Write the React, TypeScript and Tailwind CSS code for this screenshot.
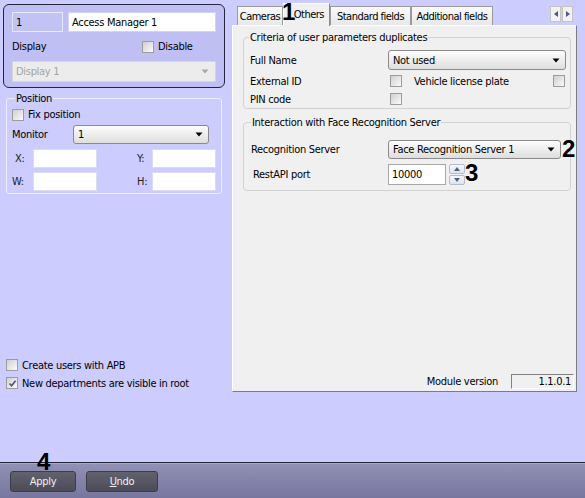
import React from "react";

const Arrow = ({ color = "#000" }: { color?: string }) => (
  <svg width="8" height="5" viewBox="0 0 8 5" className="shrink-0">
    <polygon points="0.5,0.5 7.5,0.5 4,4.5" fill={color} />
  </svg>
);

function Cb({ checked }: { checked?: boolean }) {
  return (
    <span className="inline-flex w-[12px] h-[12px] shrink-0 items-center justify-center border border-[#9c9c9c] bg-linear-to-br from-[#cfcfcf] to-[#fbfbfb]">
      {checked && (
        <svg width="9" height="9" viewBox="0 0 9 9">
          <path d="M1.5 4.5 L3.6 6.8 L7.6 1.8" stroke="#4a5a78" strokeWidth="1.7" fill="none" />
        </svg>
      )}
    </span>
  );
}

function Sel({ text, className }: { text: string; className: string }) {
  return (
    <div
      className={
        "flex items-center justify-between pl-[4px] pr-[5px] rounded-[3px] border border-[#8a8a8a] bg-linear-to-b from-[#fdfdfd] to-[#dedede] " +
        className
      }
    >
      <span>{text}</span>
      <Arrow />
    </div>
  );
}

function Tab({ label, w }: { label: string; w: string }) {
  return (
    <div
      className={
        "h-[19px] flex items-center justify-center whitespace-nowrap tracking-[-0.5px] border border-b-0 border-[#9a9a9a] bg-linear-to-b from-[#fafafa] to-[#e8e8e8] " +
        w
      }
    >
      {label}
    </div>
  );
}

export default function App() {
  return (
    <div className="relative w-[585px] h-[498px] flex flex-col bg-[#ccccff] text-black text-[11px] tracking-[-0.3px] leading-none font-['DejaVu_Sans_Condensed','DejaVu_Sans',sans-serif]">
      <div className="flex h-[392px]">
        {/* Left column */}
        <div className="w-[230px] flex flex-col">
          <div className="ml-[3px] mt-[4px] w-[222px] h-[84px] rounded-[6px] border border-[#24243a] bg-[#bfbff3] px-[8px] pt-[7px]">
            <div className="flex gap-[5px] h-[20px]">
              <div className="w-[51px] border border-[#e8e8ff] bg-[#c2c2f5] flex items-center px-[3px]">1</div>
              <div className="flex-1 bg-white border border-[#d4d4ee] flex items-center px-[3px]">Access Manager 1</div>
            </div>
            <div className="flex items-center h-[29px]">
              <span className="w-[130px]">Display</span>
              <span className="flex items-center gap-[4px]">
                <Cb />
                Disable
              </span>
            </div>
            <div className="h-[21px] flex items-center justify-between pl-[3px] pr-[6px] border border-[#d6d6d6] bg-[#ececec] text-[#a4a4a4]">
              <span>Display 1</span>
              <Arrow color="#a8a8a8" />
            </div>
          </div>

          <fieldset className="ml-[6px] mt-[3px] w-[216px] border border-[#eeeeff] rounded-[3px] pl-[5px] pr-[4px] pb-[2px]">
            <legend className="ml-[3px] px-[1px] leading-[15px]">Position</legend>
            <div className="mt-[2px] h-[13px] flex items-center gap-[4px]">
              <Cb />
              Fix position
            </div>
            <div className="mt-[4px] h-[19px] flex items-center">
              <span className="w-[61px]">Monitor</span>
              <Sel text="1" className="w-[136px] h-[19px]" />
            </div>
            <div className="mt-[5px] h-[19px] flex items-center">
              <span className="w-[21px] pl-[3px] text-[#222]">X:</span>
              <div className="w-[64px] h-[19px] bg-white border border-[#dcdcf0]" />
              <span className="ml-[40px] w-[15px] text-[#222]">Y:</span>
              <div className="w-[64px] h-[19px] bg-white border border-[#dcdcf0]" />
            </div>
            <div className="mt-[4px] h-[19px] flex items-center">
              <span className="w-[21px] text-[#222]">W:</span>
              <div className="w-[64px] h-[19px] bg-white border border-[#dcdcf0]" />
              <span className="ml-[40px] w-[15px] text-[#222]">H:</span>
              <div className="w-[64px] h-[19px] bg-white border border-[#dcdcf0]" />
            </div>
          </fieldset>

          <div className="flex-1" />
          <div className="pl-[6px]">
            <div className="h-[18px] flex items-center gap-[4px]">
              <Cb />
              Create users with APB
            </div>
            <div className="h-[18px] flex items-center gap-[4px]">
              <Cb checked />
              New departments are visible in root
            </div>
          </div>
        </div>

        {/* Right tab control */}
        <div className="w-[348px] flex flex-col">
          <div className="h-[25px] flex items-end pl-[7px]">
            <Tab label="Cameras" w="w-[46px]" />
            <div className="relative z-10 mb-[-1px] h-[23px] w-[47px] flex items-start pt-[5px] justify-end pr-[5px] tracking-[-0.5px] border border-b-0 border-white border-r-[#8a8a8a] bg-[#f0f0f0]">
              Others
            </div>
            <Tab label="Standard fields" w="w-[81px]" />
            <Tab label="Additional fields" w="w-[82px]" />
            <div className="ml-auto mr-[5px] self-start mt-[6px] flex gap-[1px]">
              <div className="w-[11px] h-[16px] flex items-center justify-center border border-[#c4c4c4] bg-[#f2f2f2]">
                <svg width="4" height="6" viewBox="0 0 4 6"><polygon points="4,0 4,6 0,3" fill="#4a5a80" /></svg>
              </div>
              <div className="w-[11px] h-[16px] flex items-center justify-center border border-[#c4c4c4] bg-[#f2f2f2]">
                <svg width="4" height="6" viewBox="0 0 4 6"><polygon points="0,0 0,6 4,3" fill="#4a5a80" /></svg>
              </div>
            </div>
          </div>

          <div className="flex-1 ml-[2px] mr-[1px] flex flex-col bg-[#f0f0f0] border border-white border-r-[#7c7c7c] border-b-[#7c7c7c] pl-[10px] pr-[5px]">
            <fieldset className="mt-[4px] border border-[#d2d2d2] rounded-[4px] pl-[6px] pr-[4px]">
              <legend className="ml-[-1px] px-[1px] leading-[15px]">Criteria of user parameters duplicates</legend>
              <div className="mt-[5px] h-[20px] flex items-center">
                <span className="w-[138px]">Full Name</span>
                <Sel text="Not used" className="w-[178px] h-[20px]" />
              </div>
              <div className="mt-[2px] h-[18px] flex items-center">
                <span className="w-[140px]">External ID</span>
                <Cb />
                <span className="ml-[12px]">Vehicle license plate</span>
                <span className="ml-auto mr-[1px] flex">
                  <Cb />
                </span>
              </div>
              <div className="h-[18px] flex items-center">
                <span className="w-[140px]">PIN code</span>
                <Cb />
              </div>
            </fieldset>

            <fieldset className="mt-[6px] border border-[#d2d2d2] rounded-[4px] pl-[6px] pr-[4px] pb-[5px]">
              <legend className="ml-[1px] px-[1px] leading-[15px]">Interaction with Face Recognition Server</legend>
              <div className="mt-[10px] h-[19px] flex items-center">
                <span className="w-[138px] pl-[1px]">Recognition Server</span>
                <Sel text="Face Recognition Server 1" className="w-[173px] h-[19px]" />
              </div>
              <div className="mt-[5px] h-[21px] flex items-center">
                <span className="w-[138px] pl-[3px]">RestAPI port</span>
                <div className="w-[58px] h-[21px] bg-white border border-[#a8a8a8] flex items-center pl-[3px]">10000</div>
                <div className="ml-[3px] w-[16px] h-[21px] flex flex-col gap-[1px]">
                  <div className="flex-1 flex items-center justify-center border border-[#b4bccc] rounded-[2px] bg-linear-to-b from-[#f6f8fc] to-[#dde3ee]">
                    <svg width="6" height="4" viewBox="0 0 6 4"><polygon points="0,4 6,4 3,0" fill="#4d6185" /></svg>
                  </div>
                  <div className="flex-1 flex items-center justify-center border border-[#b4bccc] rounded-[2px] bg-linear-to-b from-[#f6f8fc] to-[#dde3ee]">
                    <svg width="6" height="4" viewBox="0 0 6 4"><polygon points="0,0 6,0 3,4" fill="#4d6185" /></svg>
                  </div>
                </div>
              </div>
            </fieldset>

            <div className="flex-1" />
            <div className="mb-[2px] mr-[-3px] flex items-center justify-end">
              <span>Module version</span>
              <div className="ml-[13px] w-[63px] h-[15px] flex items-center justify-end pr-[2px] border border-[#808080] border-r-white border-b-white bg-[#f0f0f0]">
                1.1.0.1
              </div>
            </div>
          </div>
        </div>
      </div>

      <div className="flex-1" />

      <div className="h-[36px] border-t border-[#22223a] bg-linear-to-b from-[#9292b6] to-[#76769f] shadow-[inset_0_1px_0_#a9a9c9] flex items-start pt-[8px] pl-[10px] gap-[10px]">
        <button className="w-[66px] h-[21px] rounded-[3px] border border-[#3c3c4a] bg-linear-to-b from-[#62626f] to-[#4c4c58] text-[#f2f2f2] flex items-center justify-center">
          Apply
        </button>
        <button className="w-[72px] h-[21px] rounded-[3px] border border-[#3c3c4a] bg-linear-to-b from-[#62626f] to-[#4c4c58] text-[#f2f2f2] flex items-center justify-center">
          <span><span className="underline">U</span>ndo</span>
        </button>
      </div>

      <span className="absolute z-20 left-[282px] top-[0px] text-[24px] tracking-normal leading-[24px] font-bold font-['Liberation_Sans',sans-serif]">1</span>
      <span className="absolute z-20 left-[562px] top-[137px] text-[24px] tracking-normal leading-[24px] font-bold font-['Liberation_Sans',sans-serif]">2</span>
      <span className="absolute z-20 left-[465px] top-[161px] text-[24px] tracking-normal leading-[24px] font-bold font-['Liberation_Sans',sans-serif]">3</span>
      <span className="absolute z-20 left-[37px] top-[450px] text-[24px] tracking-normal leading-[24px] font-bold font-['Liberation_Sans',sans-serif]">4</span>
    </div>
  );
}
